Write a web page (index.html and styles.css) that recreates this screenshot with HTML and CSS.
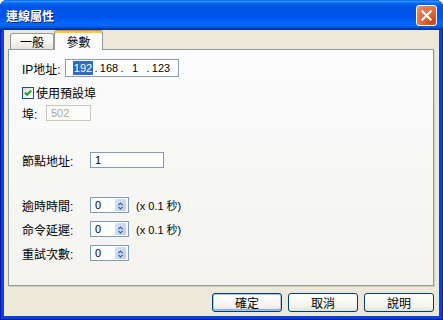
FILE: index.html
```html
<!DOCTYPE html>
<html lang="zh-Hant">
<head>
<meta charset="utf-8">
<title>連線屬性</title>
<link rel="stylesheet" href="styles.css">
</head>
<body>
<div class="window">
  <div class="titlebar">
    <span class="title">連線屬性</span>
    <span class="close" aria-label="關閉">
      <svg width="11" height="11" viewBox="0 0 11 11"><path d="M1.5 1.5 L9.5 9.5 M9.5 1.5 L1.5 9.5" stroke="#fff" stroke-width="2.2" stroke-linecap="square" fill="none"/></svg>
    </span>
  </div>
  <div class="client">
    <div class="tabs">
      <div class="tab tab-general">一般</div>
      <div class="tab tab-active">參數</div>
    </div>
    <div class="panel">
      <div class="row row-ip">
        <span class="lbl lbl-ip">IP地址:</span>
        <div class="ipbox">
          <span class="oct"><span class="sel">192</span></span><span class="dot">.</span><span class="oct">168</span><span class="dot">.</span><span class="oct">1</span><span class="dot">.</span><span class="oct">123</span>
        </div>
      </div>
      <div class="row row-check">
        <span class="checkbox">
          <svg width="10" height="10" viewBox="0 0 10 10"><path d="M2 4.6 L4.1 6.8 L8.2 2.6" stroke="#21A121" stroke-width="2" fill="none"/></svg>
        </span>
        <span>使用預設埠</span>
      </div>
      <div class="row row-port">
        <span class="lbl lbl-port">埠:</span>
        <div class="field field-port disabled">502</div>
      </div>
      <div class="row row-node">
        <span class="lbl lbl-wide">節點地址:</span>
        <div class="field field-node">1</div>
      </div>
      <div class="row row-spin row-spin-first">
        <span class="lbl lbl-wide">逾時時間:</span>
        <div class="spin">
          <span class="spin-val">0</span>
          <span class="spin-btn"><svg width="13" height="14" viewBox="0 0 13 14"><path d="M4 6 L6.5 3.6 L9 6 M4 8 L6.5 10.4 L9 8" stroke="#4D6185" stroke-width="1.5" fill="none"/></svg></span>
        </div>
        <span class="unit">(x 0.1 秒)</span>
      </div>
      <div class="row row-spin">
        <span class="lbl lbl-wide">命令延遲:</span>
        <div class="spin">
          <span class="spin-val">0</span>
          <span class="spin-btn"><svg width="13" height="14" viewBox="0 0 13 14"><path d="M4 6 L6.5 3.6 L9 6 M4 8 L6.5 10.4 L9 8" stroke="#4D6185" stroke-width="1.5" fill="none"/></svg></span>
        </div>
        <span class="unit">(x 0.1 秒)</span>
      </div>
      <div class="row row-spin">
        <span class="lbl lbl-wide">重試次數:</span>
        <div class="spin">
          <span class="spin-val">0</span>
          <span class="spin-btn"><svg width="13" height="14" viewBox="0 0 13 14"><path d="M4 6 L6.5 3.6 L9 6 M4 8 L6.5 10.4 L9 8" stroke="#4D6185" stroke-width="1.5" fill="none"/></svg></span>
        </div>
      </div>
    </div>
    <div class="footer">
      <span class="btn btn-default">確定</span>
      <span class="btn">取消</span>
      <span class="btn">說明</span>
    </div>
  </div>
</div>
</body>
</html>
```

FILE: styles.css
```css
* { box-sizing: border-box; }
html, body { margin: 0; padding: 0; background: #ffffff; }
body {
  font-family: "Liberation Sans", "Noto Sans CJK TC", sans-serif;
  font-size: 12px;
  color: #000;
}
.window {
  width: 443px;
  height: 320px;
  display: flex;
  flex-direction: column;
  background: #0842D8;
  border-radius: 7px 7px 0 0;
  overflow: hidden;
  box-shadow: inset 1px 0 #0019B0, inset -1px 0 #0019B0, inset 0 -1px #001A9E;
}
.titlebar {
  flex: none;
  height: 30px;
  display: flex;
  align-items: center;
  justify-content: space-between;
  padding: 0 6px 0 6px;
  background: linear-gradient(#0058EE 0%, #3593FF 4%, #288EFF 6%, #127DFF 8%, #036FFC 10%, #0262EE 14%, #0057E5 20%, #0054E3 24%, #0055EB 56%, #005BF5 66%, #026AFE 76%, #0062EF 86%, #0052D6 92%, #0040AB 94%, #003092 100%);
}
.title {
  color: #fff;
  font-family: "Noto Sans CJK TC", sans-serif;
  font-weight: bold;
  font-size: 12px;
  text-shadow: 1px 1px #0A1883;
}
.close {
  width: 21px;
  height: 21px;
  border: 1px solid #fff;
  border-radius: 3px;
  background: radial-gradient(circle at 85% 85%, #CC4614 0%, #DC6536 40%, #E37F5F 80%, #E9A589 100%);
  display: flex;
  align-items: center;
  justify-content: center;
}
.client {
  flex: 1;
  margin: 0 4px 4px;
  background: #ECE9D8;
  display: flex;
  flex-direction: column;
  padding: 0 5px 0 4px;
}
.tabs {
  flex: none;
  height: 19px;
  display: flex;
  align-items: flex-end;
  padding-left: 2px;
  font-family: "Noto Sans CJK TC", sans-serif;
}
.tab {
  height: 16px;
  border: 1px solid #919B9C;
  border-bottom: none;
  border-radius: 3px 3px 0 0;
  background: linear-gradient(#FFFFFF, #F3F3EF 60%, #E3E2DA);
  display: flex;
  align-items: center;
  justify-content: center;
}
.tab-general { width: 44px; }
.tab-active {
  width: 49px;
  height: 20px;
  margin-bottom: -1px;
  position: relative;
  background: #FCFCFE;
  border-top: 1px solid #E68B2C;
  box-shadow: inset 0 2px #FFC83C;
  padding-top: 2px;
}
.panel {
  flex: 1;
  border: 1px solid #919B9C;
  background: linear-gradient(#FCFCFE, #F4F3EE);
  box-shadow: 1px 1px 0 #D0CEBF;
  padding-left: 13px;
  display: flex;
  flex-direction: column;
  align-items: flex-start;
}
.row { display: flex; align-items: center; }
.row-ip { margin-top: 9px; height: 18px; }
.row-check { margin-top: 9px; height: 13px; }
.row-port { margin-top: 6px; height: 16px; }
.row-node { margin-top: 31px; height: 16px; }
.row-spin { margin-top: 8px; height: 16px; }
.row-spin-first { margin-top: 29px; }
.lbl { flex: none; }
.lbl-ip { width: 43px; }
.lbl-port { width: 24px; }
.lbl-wide { width: 68px; }
.ipbox {
  width: 114px;
  height: 18px;
  border: 1px solid #7F9DB9;
  background: #fff;
  display: flex;
  align-items: center;
  padding-left: 7px;
  font-size: 11px;
}
.oct { width: 20px; text-align: center; }
.dot { width: 6px; text-align: center; }
.sel {
  display: inline-block;
  width: 20px;
  line-height: 14px;
  background: #316AC5;
  color: #fff;
}
.checkbox {
  width: 12px;
  height: 12px;
  margin-right: 2px;
  border: 1px solid #1C5180;
  background: linear-gradient(135deg, #DCDCD7, #FFFFFF);
  display: flex;
  align-items: center;
  justify-content: center;
}
.field {
  height: 16px;
  border: 1px solid #7F9DB9;
  background: #fff;
  padding-left: 4px;
  font-size: 11px;
  display: flex;
  align-items: center;
}
.field-port { width: 45px; }
.field-node { width: 74px; }
.disabled {
  border-color: #C9C7BA;
  background: #FBFBF9;
  color: #ACA899;
}
.spin {
  width: 39px;
  height: 16px;
  border: 1px solid #7F9DB9;
  background: #fff;
  display: flex;
  align-items: center;
  justify-content: space-between;
  padding: 0 1px 0 4px;
  font-size: 11px;
}
.spin-btn {
  width: 13px;
  height: 14px;
  border: 1px solid #fff;
  border-radius: 2px;
  background: linear-gradient(135deg, #D6E1FC, #B9CBF6);
  display: flex;
}
.spin-btn svg { display: block; }
.unit { margin-left: 7px; font-size: 11px; }
.footer {
  flex: none;
  height: 30px;
  padding-top: 7px;
  display: flex;
  justify-content: flex-end;
  align-items: flex-start;
  gap: 6px;
}
.btn {
  width: 70px;
  height: 19px;
  border: 1px solid #003C74;
  border-radius: 3px;
  background: linear-gradient(#FFFFFF, #F5F4F0 70%, #E3E1D8);
  display: flex;
  align-items: center;
  justify-content: center;
  font-family: "Noto Sans CJK TC", sans-serif;
}
.btn-default {
  box-shadow: inset 0 0 0 1px #A9C4F2, inset 0 -1px 0 1px #89ADE4;
}
```
